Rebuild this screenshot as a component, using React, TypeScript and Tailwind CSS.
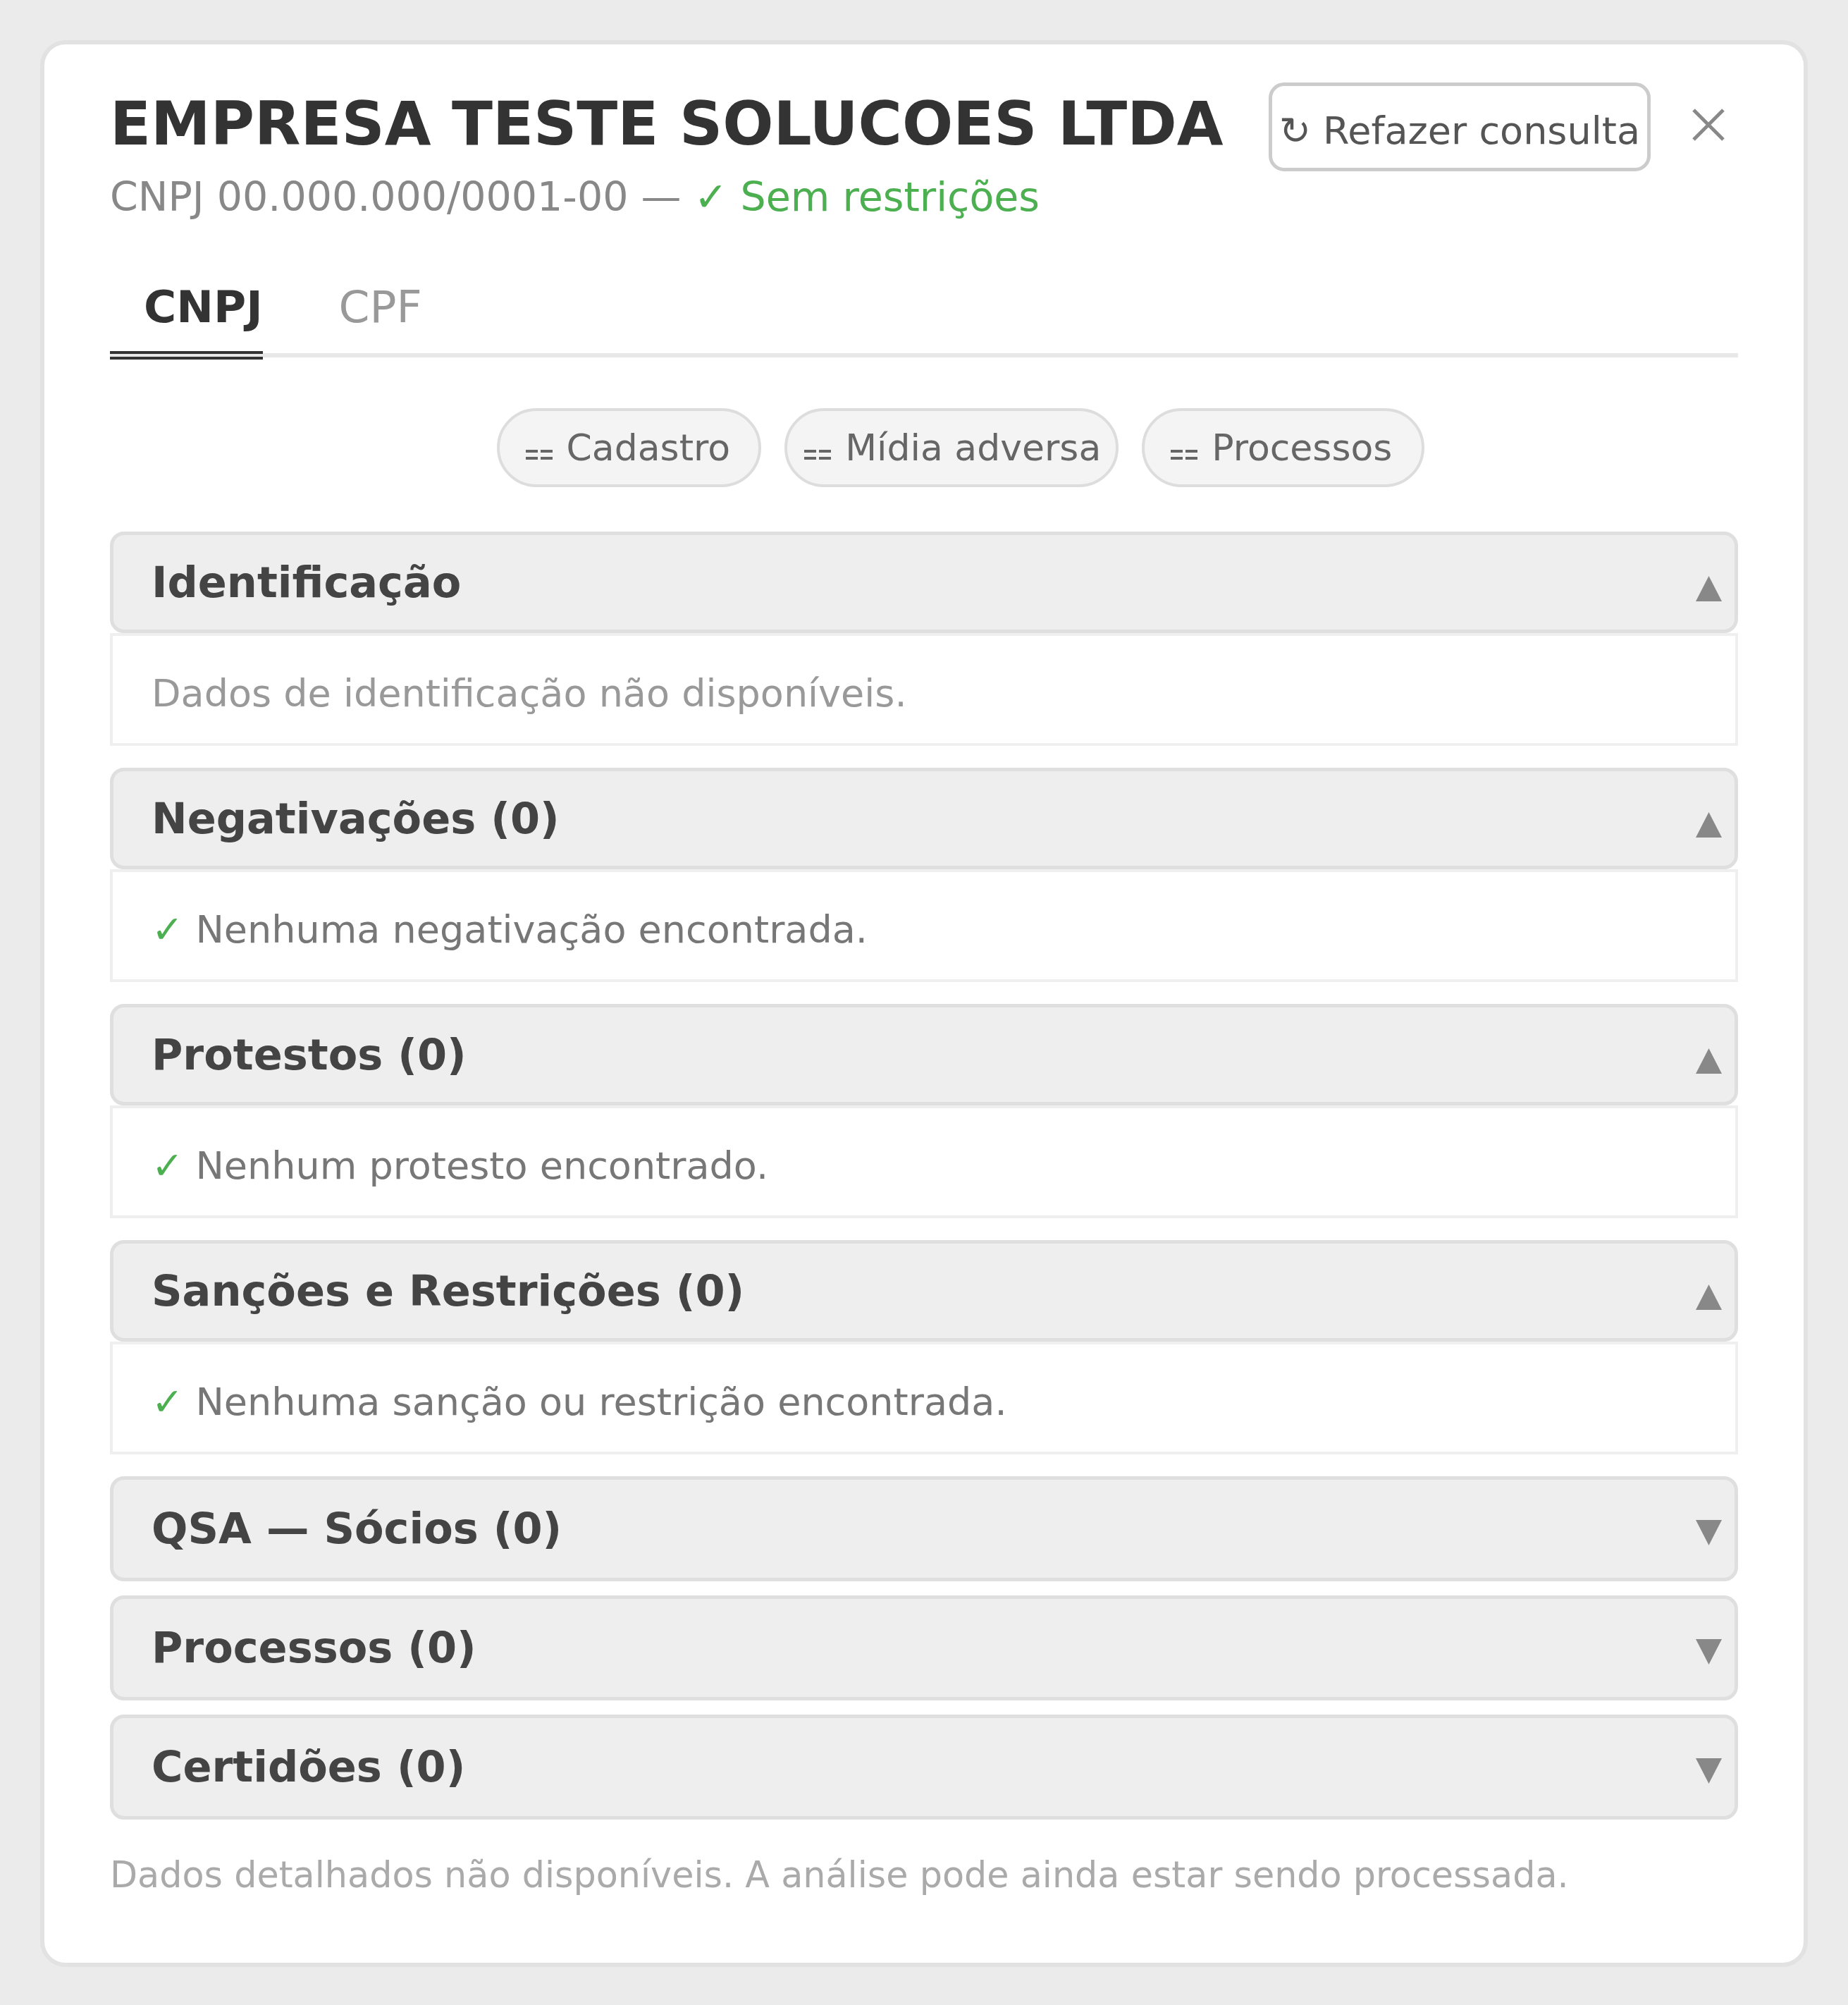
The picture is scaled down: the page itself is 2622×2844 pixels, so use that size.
import React from "react";

type Section = {
  title: string;
  open: boolean;
  body?: string;
  ok?: boolean;
};

const sections: Section[] = [
  { title: "Identificação", open: true, body: "Dados de identificação não disponíveis." },
  { title: "Negativações (0)", open: true, ok: true, body: "Nenhuma negativação encontrada." },
  { title: "Protestos (0)", open: true, ok: true, body: "Nenhum protesto encontrado." },
  { title: "Sanções e Restrições (0)", open: true, ok: true, body: "Nenhuma sanção ou restrição encontrada." },
  { title: "QSA — Sócios (0)", open: false },
  { title: "Processos (0)", open: false },
  { title: "Certidões (0)", open: false },
];

const pills = [
  { label: "Cadastro", pad: "pl-[37px] pr-[40px]" },
  { label: "Mídia adversa", pad: "pl-[24px] pr-[21px]" },
  { label: "Processos", pad: "pl-[37px] pr-[42px]" },
];

const GripIcon = () => (
  <svg width="38" height="14" viewBox="0 0 38 14" className="mt-[20px] shrink-0" aria-hidden>
    <g fill="#666">
      <rect x="0" y="0" width="17" height="4" />
      <rect x="21" y="0" width="17" height="4" />
      <rect x="0" y="10" width="17" height="4" />
      <rect x="21" y="10" width="17" height="4" />
    </g>
  </svg>
);

const Caret = ({ up }: { up: boolean }) => (
  <svg
    width="37"
    height="36"
    viewBox="0 0 37 36"
    className={up ? "mt-[17px] shrink-0" : "mt-[11px] shrink-0"}
    aria-hidden
  >
    <polygon points={up ? "0,36 18.5,0 37,36" : "0,0 37,0 18.5,36"} fill="#888" />
  </svg>
);

export default function App() {
  return (
    <div className="min-h-screen bg-[#ebebeb] p-[57px] font-['DejaVu_Sans','Liberation_Sans',sans-serif]">
      <div className="rounded-[36px] border-[6px] border-[#e2e2e2] bg-white px-[93px] pt-[54px] pb-[98px]">
        {/* header: name, document and actions */}
        <div className="flex items-start">
          <div className="min-w-0 flex-1">
            <h1 className="mt-[16px] whitespace-nowrap text-[85px] font-bold leading-none text-[#333]">
              EMPRESA TESTE SOLUCOES LTDA
            </h1>
            <p className="mt-[33px] whitespace-nowrap text-[57px] leading-none text-[#888]">
              CNPJ 00.000.000/0001-00 — <span className="text-[#4caf50]">✓ Sem restrições</span>
            </p>
          </div>
          <button className="flex h-[126px] shrink-0 items-center whitespace-nowrap rounded-[22px] border-[5px] border-[#ccc] bg-white px-[10px] pt-[12px] text-[54px] leading-none text-[#555]">
            ↻ Refazer consulta
          </button>
          <button className="ml-[58px] mr-[18px] mt-[37px] shrink-0" aria-label="Fechar">
            <svg width="48" height="46" viewBox="0 0 48 46" aria-hidden>
              <path d="M3 2 L45 44 M45 2 L3 44" stroke="#888" strokeWidth="5" fill="none" />
            </svg>
          </button>
        </div>

        {/* tabs */}
        <div className="mt-[76px] flex border-b-[6px] border-[#e8e8e8]">
          <div className="-mb-[9px] border-b-[12px] border-double border-[#333] pl-[48px] pt-[20px] pb-[31px] text-[63px] font-bold leading-none text-[#333]">
            CNPJ
          </div>
          <div className="-mb-[9px] ml-[63px] border-b-[12px] border-transparent pl-[45px] pt-[20px] pb-[31px] text-[63px] leading-none text-[#999]">
            CPF
          </div>
        </div>

        {/* section shortcuts */}
        <div className="mt-[72px] flex justify-center gap-[33px] pl-[104px]">
          {pills.map((p) => (
            <span
              key={p.label}
              className={`flex h-[112px] items-center gap-[20px] whitespace-nowrap rounded-full border-[4px] border-[#ddd] bg-[#f4f4f4] text-[52px] leading-none text-[#666] ${p.pad}`}
            >
              <GripIcon />
              {p.label}
            </span>
          ))}
        </div>

        {/* accordion */}
        <div className="mt-[63px]">
          {sections.map((s) => (
            <div key={s.title} className={s.open ? "mb-[31px]" : "mb-[20px]"}>
              <div
                className={`flex items-center justify-between rounded-[20px] border-[5px] border-[#dfdfdf] bg-[#eeeeee] pl-[54px] pr-[18px] ${
                  s.open ? "h-[144px]" : "h-[149px]"
                }`}
              >
                <span className="text-[60.5px] font-bold leading-none text-[#444]">{s.title}</span>
                <Caret up={s.open} />
              </div>
              {s.open && (
                <div
                  className={`flex h-[160px] items-center border-[4px] border-[#efefef] bg-white pl-[55px] pt-[11px] text-[54px] leading-none ${
                    s.ok ? "text-[#777]" : "text-[#999]"
                  }`}
                >
                  {s.ok && <span className="text-[#4caf50]">✓&nbsp;</span>}
                  {s.body}
                </div>
              )}
            </div>
          ))}
        </div>

        <p className="mt-[54px] text-[50.8px] leading-none text-[#aaa]">
          Dados detalhados não disponíveis. A análise pode ainda estar sendo processada.
        </p>
      </div>
    </div>
  );
}
